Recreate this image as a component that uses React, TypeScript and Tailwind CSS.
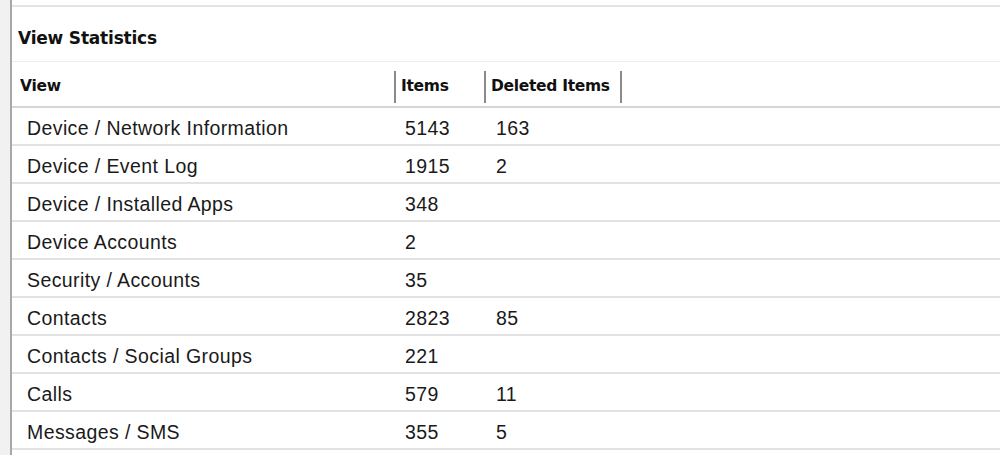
import React from "react";

const rows: [string, string, string][] = [
  ["Device / Network Information", "5143", "163"],
  ["Device / Event Log", "1915", "2"],
  ["Device / Installed Apps", "348", ""],
  ["Device Accounts", "2", ""],
  ["Security / Accounts", "35", ""],
  ["Contacts", "2823", "85"],
  ["Contacts / Social Groups", "221", ""],
  ["Calls", "579", "11"],
  ["Messages / SMS", "355", "5"],
];

export default function App() {
  return (
    <div
      className="w-[1000px] h-[455px] overflow-hidden bg-white flex"
      style={{ fontFamily: '"Liberation Sans", Arial, sans-serif' }}
    >
      <div className="w-[10px] shrink-0 bg-[#f1f1f1]" />
      <div className="w-[2px] shrink-0 bg-[#a8a8a8]" />
      <div className="flex-1 flex flex-col">
        <div className="h-[5px] shrink-0 bg-white" />
        <div className="h-[2px] shrink-0 bg-[#e4e4e4]" />
        <div className="h-[55px] shrink-0 flex items-center pt-[10px] pl-[6px] border-b border-[#ececec]">
          <span
            className="text-[17px] font-bold text-[#111] tracking-[-0.2px]"
            style={{ fontFamily: '"DejaVu Sans", Tahoma, sans-serif' }}
          >
            View Statistics
          </span>
        </div>
        <div
          className="h-[46px] shrink-0 flex items-center pt-[5px] text-[15.5px] font-bold text-[#111] border-b-2 border-[#d6d6d6]"
          style={{ fontFamily: '"DejaVu Sans", Tahoma, sans-serif' }}
        >
          <div className="w-[382px] pl-[8px] tracking-[-0.3px]">View</div>
          <div className="w-[2px] h-[32px] bg-[#8a8a8a]" />
          <div className="w-[88px] pl-[5px] tracking-[-0.3px]">Items</div>
          <div className="w-[2px] h-[32px] bg-[#8a8a8a]" />
          <div className="w-[134px] pl-[5px] tracking-[-0.3px]">Deleted Items</div>
          <div className="w-[2px] h-[32px] bg-[#8a8a8a]" />
        </div>
        {rows.map(([name, items, del]) => (
          <div
            key={name}
            className="h-[38px] shrink-0 flex items-center pt-[5px] text-[19.5px] tracking-[0.4px] text-[#1a1a1a] border-b-2 border-[#e2e2e2]"
          >
            <div className="w-[384px] pl-[15px]">{name}</div>
            <div className="w-[90px] pl-[9px]">{items}</div>
            <div className="pl-[10px]">{del}</div>
          </div>
        ))}
      </div>
    </div>
  );
}
